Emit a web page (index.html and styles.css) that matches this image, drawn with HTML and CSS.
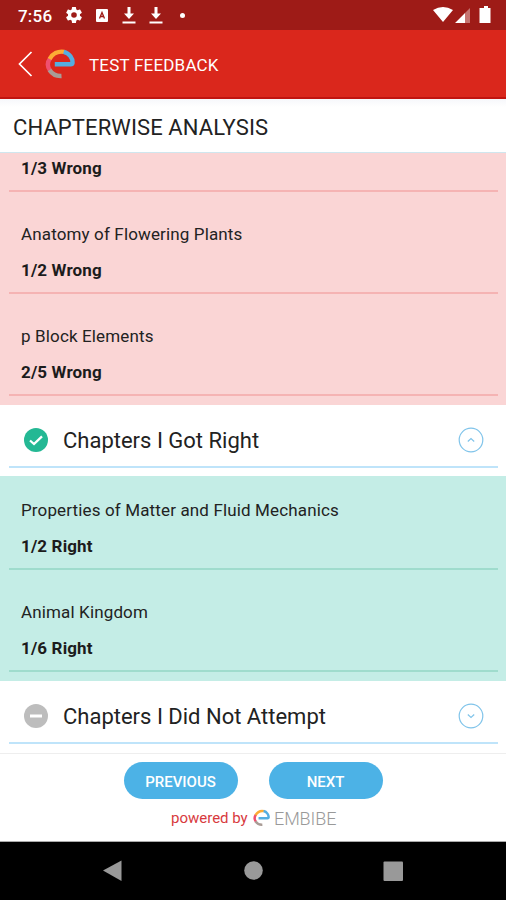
FILE: index.html
```html
<!DOCTYPE html>
<html lang="en">
<head>
<meta charset="utf-8">
<title>Test Feedback</title>
<link rel="stylesheet" href="styles.css">
</head>
<body>
<svg width="0" height="0" class="defs">
  <symbol id="e-logo" viewBox="0 0 30 30">
    <g fill="none" stroke-width="4.4">
      <path class="e-pink" d="M5.300 9Q.400 15.500 5.200 21.800"/>
      <path class="e-grey" d="M4.500 21C7.500 25.500 11.500 27.300 16.500 27"/>
      <path class="e-orange" d="M4.600 10C7.500 4.800 13 1.800 19.200 2.900"/>
      <path class="e-blue" stroke-linejoin="round" d="M18.700 2.800C24.500 4.200 28 9.500 27.500 14.200Q27.300 15.300 25.800 15.300H9.800"/>
    </g>
  </symbol>
</svg>
<div class="screen">
  <div class="status">
    <span class="time">7:56</span>
    <svg class="gear" width="16" height="16" viewBox="2 2 20 20"><path fill="#fff" fill-rule="evenodd" d="M19.4 13a7.500 7.500 0 0 0 0-2l2.100-1.650a.5.5 0 0 0 .12-.64l-2-3.460a.5.5 0 0 0-.61-.22l-2.490 1a7.300 7.300 0 0 0-1.690-.98l-.38-2.650A.5.5 0 0 0 14 2h-4a.5.5 0 0 0-.49.42l-.38 2.650a7.700 7.700 0 0 0-1.690.98l-2.490-1a.5.5 0 0 0-.61.22l-2 3.460a.5.5 0 0 0 .12.64L4.570 11a8 8 0 0 0 0 2l-2.110 1.650a.5.5 0 0 0-.12.64l2 3.460c.12.220.39.3.61.22l2.490-1c.52.4 1.080.73 1.690.98l.38 2.650c.03.240.24.42.49.42h4c.25 0 .46-.18.49-.42l.38-2.650a7.700 7.700 0 0 0 1.690-.98l2.490 1c.23.09.49 0 .61-.22l2-3.460a.5.5 0 0 0-.12-.64zM12 15.500a3.500 3.500 0 1 1 0-7 3.500 3.500 0 0 1 0 7z"/></svg>
    <svg class="badge" width="12" height="13" viewBox="0 0 12 13"><rect width="12" height="13" rx="1" fill="#fff"/><path d="M3.500 9.500 6 3.500 8.500 9.500M4.500 7.500H7.500" fill="none" stroke="#9e1b17" stroke-width="1.300"/></svg>
    <svg class="down" width="14" height="17" viewBox="0 0 14 17"><path fill="#fff" d="M5.500 0h3v6.500h3.500L7 12 2 6.500h3.500zM.5 14.500h13v2H.5z"/></svg>
    <svg class="down" width="14" height="17" viewBox="0 0 14 17"><path fill="#fff" d="M5.500 0h3v6.500h3.500L7 12 2 6.500h3.500zM.5 14.500h13v2H.5z"/></svg>
    <span class="dot"></span>
    <svg class="signals" width="58" height="18" viewBox="0 0 58 18"><path fill="#fff" d="M0 4Q10-2 20 4L10 16zM22 17 32 7V17zM48 2h3V0h4v2h2.500v15H46.500V2z"/><path fill="#c67471" d="M32 7 37 2V17H32z"/></svg>
  </div>
  <header class="bar">
    <svg class="back" width="15" height="26" viewBox="0 0 15 26"><path d="M13.500 1 1.500 13 13.500 25" fill="none" stroke="#fff" stroke-width="1.700"/></svg>
    <svg class="logo" width="30" height="30"><use href="#e-logo"/></svg>
    <span class="bar-title">TEST FEEDBACK</span>
  </header>
  <h1 class="title">CHAPTERWISE ANALYSIS</h1>
  <main class="content">
    <div class="list wrong">
      <div class="item cut"><b>1/3 Wrong</b></div>
      <div class="item"><span>Anatomy of Flowering Plants</span><b>1/2 Wrong</b></div>
      <div class="item"><span>p Block Elements</span><b>2/5 Wrong</b></div>
    </div>
    <div class="section">
      <svg width="24" height="24" viewBox="0 0 24 24"><circle cx="12" cy="12" r="12" fill="#24b894"/><path d="M6 12.500 10 16 18 8.300" fill="none" stroke="#fff" stroke-width="2.300"/></svg>
      <h2>Chapters I Got Right</h2>
      <svg width="26" height="26" viewBox="0 0 26 26" fill="none" stroke="#80c4ea"><circle cx="13" cy="13" r="11.800" stroke-width="1.200"/><path d="M9.800 14.500 13 11.500 16.200 14.500" stroke-width="1.200"/></svg>
    </div>
    <div class="list right">
      <div class="item first"><span>Properties of Matter and Fluid Mechanics</span><b>1/2 Right</b></div>
      <div class="item"><span>Animal Kingdom</span><b>1/6 Right</b></div>
    </div>
    <div class="section">
      <svg width="24" height="24" viewBox="0 0 24 24"><circle cx="12" cy="12" r="12" fill="#bdbdbd"/><path d="M6 12H18" stroke="#fff" stroke-width="3"/></svg>
      <h2>Chapters I Did Not Attempt</h2>
      <svg width="26" height="26" viewBox="0 0 26 26" fill="none" stroke="#80c4ea"><circle cx="13" cy="13" r="11.800" stroke-width="1.200"/><path d="M9.800 11.500 13 14.500 16.200 11.500" stroke-width="1.200"/></svg>
    </div>
  </main>
  <footer class="footer">
    <div class="buttons"><button>PREVIOUS</button><button>NEXT</button></div>
    <div class="powered"><span class="by">powered by</span><svg width="17" height="18"><use href="#e-logo"/></svg><span class="brand">EMBIBE</span></div>
  </footer>
  <nav class="nav">
    <svg width="506" height="58" viewBox="0 0 506 58" fill="#999"><path d="M103 28.500 121.500 18.500V39z"/><circle cx="253.500" cy="28.500" r="9.300"/><rect x="383.500" y="19.500" width="19.500" height="19.500" rx="1"/></svg>
  </nav>
</div>
</body>
</html>
```
FILE: styles.css
```css
* { box-sizing: border-box; }
body { margin: 0; font-family: Roboto, "Liberation Sans", sans-serif; color: #222; background: #fff; }
.defs { position: absolute; }
.screen { width: 506px; height: 900px; display: flex; flex-direction: column; overflow: hidden; }
.status { height: 30px; flex: none; background: #9e1b17; display: flex; align-items: center; padding: 0 15px 0 18px; }
.time { width: 48px; font-size: 17px; font-weight: 500; color: #fff; line-height: 30px; padding-top: 2px; letter-spacing: .2px; }
.badge { margin-left: 14px; }
.down { margin-left: 13.5px; }
.dot { width: 5px; height: 5px; border-radius: 50%; background: #fff; margin-left: 17px; }
.signals { margin-left: auto; }
.bar { height: 69px; flex: none; background: #da271c; border-bottom: 2px solid #c01410; display: flex; align-items: center; padding-left: 18px; }
.logo { margin-left: 12px; }
.bar-title { margin-left: 14px; padding-top: 2px; font-size: 17px; letter-spacing: .2px; color: #fff; white-space: nowrap; }
.e-grey { stroke: #a99c96; }
.e-pink { stroke: #ef5070; }
.e-orange { stroke: #fdac35; }
.e-blue { stroke: #55aee0; }
.title { margin: 0; height: 54px; flex: none; padding-left: 13px; font-size: 22px; letter-spacing: .1px; line-height: 57px; font-weight: 400; background: linear-gradient(#f6f7fb, #fff 8px); border-bottom: 1px solid #cfe6ee; white-space: nowrap; }
.content { height: 600px; flex: none; overflow: hidden; }
.list { padding: 0 8px 9px 9px; }
.wrong { background: #fad5d5; height: 252px; --line: #f5b3b3; }
.right { background: #c4ede6; height: 205px; --line: #9fdccd; }
.item { height: 102px; padding: 32px 0 0 12px; border-bottom: 2px solid var(--line); display: flex; flex-direction: column; align-items: flex-start; gap: 16px; font-size: 17px; letter-spacing: .14px; line-height: 20px; white-space: nowrap; }
.item b { font-weight: 700; color: #1c1c1c; }
.item.cut { height: 39px; padding-top: 5px; }
.item.first { height: 94px; padding-top: 24px; }
.section { height: 63px; margin: 0 8px 8px 9px; padding: 8px 14px 0 15px; border-bottom: 2px solid #bfe4fa; display: flex; align-items: center; }
.section h2 { margin: 0 auto 0 15px; padding-top: 2px; font-size: 22px; font-weight: 400; line-height: 28px; white-space: nowrap; }
.footer { height: 89px; flex: none; border-top: 1px solid #eee; border-bottom: 1px solid #aaa; padding-top: 8px; }
.buttons { display: flex; justify-content: center; gap: 31px; }
button { width: 114px; height: 37px; border: 0; border-radius: 19px; background: #4cb2e6; color: #fff; font: 500 15px Roboto, sans-serif; padding: 2px 0 0; }
.powered { display: flex; align-items: center; height: 22px; margin: 8px 0 0 171px; white-space: nowrap; }
.by { font-size: 15px; color: #d83a3e; width: 82px; }
.brand { font-size: 18px; font-weight: 300; color: #999; margin-left: 4px; letter-spacing: -.1px; }
.nav { height: 58px; flex: none; background: #000; }
.nav svg { display: block; }
```
